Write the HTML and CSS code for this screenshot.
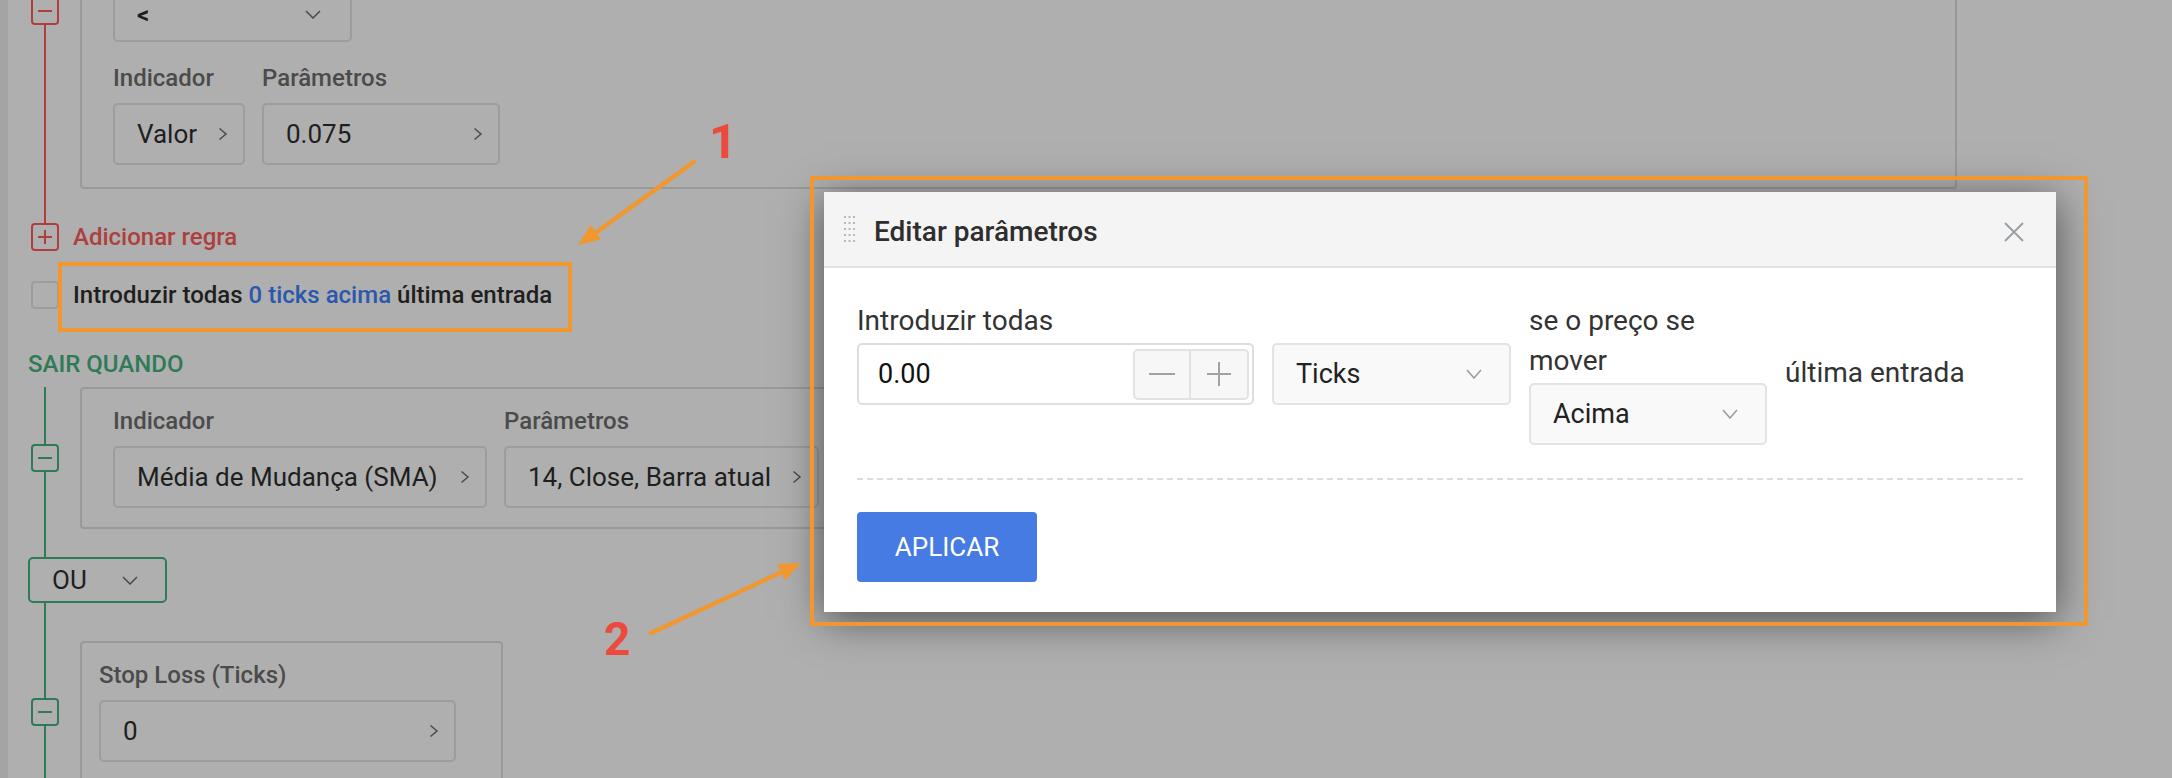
FILE: index.html
```html
<!DOCTYPE html>
<html lang="pt">
<head>
<meta charset="utf-8">
<title>Editar parâmetros</title>
<link rel="stylesheet" href="styles.css">
</head>
<body>
<div class="app">
  <div class="strip"></div>
  <main class="main">
    <section class="group red">
      <div class="tree">
        <div class="rule">
          <span class="toggle"><svg viewBox="0 0 14 14"><path d="M0 7h14"/></svg></span>
          <div class="panel wide first">
            <div class="fields">
              <div class="box select w-op"><span class="op">&lt;</span><svg class="chev-d" viewBox="0 0 16 9"><path d="M1 1l7 7 7-7"/></svg></div>
            </div>
            <div class="fields">
              <div class="field">
                <div class="label">Indicador</div>
                <div class="box w-valor"><span>Valor</span><svg class="chev-r" viewBox="0 0 10 14"><path d="M1.5 1.5 8 7l-6.5 5.5"/></svg></div>
              </div>
              <div class="field">
                <div class="label">Parâmetros</div>
                <div class="box w-param"><span>0.075</span><svg class="chev-r" viewBox="0 0 10 14"><path d="M1.5 1.5 8 7l-6.5 5.5"/></svg></div>
              </div>
            </div>
          </div>
        </div>
      </div>
      <div class="add">
        <span class="toggle"><svg viewBox="0 0 14 14"><path d="M0 7h14M7 0v14"/></svg></span>
        <span class="add-text">Adicionar regra</span>
      </div>
    </section>

    <div class="entry">
      <span class="checkbox"></span>
      <span class="entry-text">Introduzir todas <span class="link">0 ticks acima</span> última entrada</span>
    </div>

    <h3 class="section-title">SAIR QUANDO</h3>

    <section class="group green">
      <div class="tree">
        <div class="rule">
          <span class="toggle"><svg viewBox="0 0 14 14"><path d="M0 7h14"/></svg></span>
          <div class="panel wide">
            <div class="fields">
              <div class="field">
                <div class="label">Indicador</div>
                <div class="box w-media"><span>Média de Mudança (SMA)</span><svg class="chev-r" viewBox="0 0 10 14"><path d="M1.5 1.5 8 7l-6.5 5.5"/></svg></div>
              </div>
              <div class="field">
                <div class="label">Parâmetros</div>
                <div class="box w-close"><span>14, Close, Barra atual</span><svg class="chev-r" viewBox="0 0 10 14"><path d="M1.5 1.5 8 7l-6.5 5.5"/></svg></div>
              </div>
            </div>
          </div>
        </div>
        <div class="logic">
          <div class="logic-select"><span>OU</span><svg class="chev-d" viewBox="0 0 16 9"><path d="M1 1l7 7 7-7"/></svg></div>
        </div>
        <div class="rule rule-stop">
          <span class="toggle"><svg viewBox="0 0 14 14"><path d="M0 7h14"/></svg></span>
          <div class="panel stop">
            <div class="field">
              <div class="label">Stop Loss (Ticks)</div>
              <div class="box w-stop"><span>0</span><svg class="chev-r" viewBox="0 0 10 14"><path d="M1.5 1.5 8 7l-6.5 5.5"/></svg></div>
            </div>
          </div>
        </div>
      </div>
    </section>
  </main>
</div>

<div class="modal">
  <div class="modal-header">
    <svg class="grip" viewBox="0 0 11 26">
      <rect x="0" y="0" width="2" height="2"/><rect x="4.5" y="0" width="2" height="2"/><rect x="9" y="0" width="2" height="2"/>
      <rect x="0" y="6" width="2" height="2"/><rect x="4.5" y="6" width="2" height="2"/><rect x="9" y="6" width="2" height="2"/>
      <rect x="0" y="12" width="2" height="2"/><rect x="4.5" y="12" width="2" height="2"/><rect x="9" y="12" width="2" height="2"/>
      <rect x="0" y="18" width="2" height="2"/><rect x="4.5" y="18" width="2" height="2"/><rect x="9" y="18" width="2" height="2"/>
      <rect x="0" y="24" width="2" height="2"/><rect x="4.5" y="24" width="2" height="2"/><rect x="9" y="24" width="2" height="2"/>
    </svg>
    <span class="modal-title">Editar parâmetros</span>
    <svg class="close" viewBox="0 0 20 20"><path d="M1 1l18 18M19 1 1 19"/></svg>
  </div>
  <div class="modal-body">
    <div class="form-row">
      <div class="mfield f-amount">
        <div class="mlabel">Introduzir todas</div>
        <div class="num-input">
          <span class="num-value">0.00</span>
          <div class="stepper">
            <span class="step"><svg viewBox="0 0 26 2"><path d="M0 1h26"/></svg></span>
            <span class="step"><svg class="plus" viewBox="0 0 24 24"><path d="M0 12h24M12 0v24"/></svg></span>
          </div>
        </div>
      </div>
      <div class="mfield f-unit">
        <div class="mlabel">&nbsp;</div>
        <div class="mselect"><span>Ticks</span><svg class="chev-dm" viewBox="0 0 16 10"><path d="M1 1l7 8 7-8"/></svg></div>
      </div>
      <div class="mfield f-dir">
        <div class="mlabel">se o preço se mover</div>
        <div class="mselect"><span>Acima</span><svg class="chev-dm" viewBox="0 0 16 10"><path d="M1 1l7 8 7-8"/></svg></div>
      </div>
      <div class="tail">última entrada</div>
    </div>
    <div class="separator"></div>
    <button class="apply">APLICAR</button>
  </div>
</div>

<svg class="annot" viewBox="0 0 2172 778">
  <rect x="60" y="264" width="510" height="66"/>
  <rect x="812" y="178" width="1274" height="446"/>
  <line x1="695" y1="161" x2="594" y2="234"/>
  <polygon points="578,245 590.7,224.9 601.1,239.5"/>
  <line x1="649" y1="634" x2="783" y2="571.5"/>
  <polygon points="801,563 777.3,564.1 784.9,580.5"/>
</svg>
<span class="mark mark-1">1</span>
<span class="mark mark-2">2</span>
</body>
</html>
```

FILE: styles.css
```css
* { box-sizing: border-box; }

html, body {
  margin: 0;
  width: 2172px;
  height: 778px;
  overflow: hidden;
}

body {
  position: relative;
  background: #afafaf;
  font-family: Roboto, "Noto Sans", "Liberation Sans", sans-serif;
  color: #1f1f1f;
}

.app {
  display: flex;
  height: 778px;
  overflow: hidden;
}

.strip {
  width: 8px;
  flex: none;
  background: #a4a4a4;
}

.main {
  flex: 1;
  padding-left: 20px;
  margin-top: -167px;
}

/* tree */
.tree {
  margin-left: 16px;
  border-left: 2px solid;
  padding-left: 34px;
}
.red .tree { border-color: #ae3f3d; padding-bottom: 34px; }
.green .tree { border-color: #2f7b57; padding-bottom: 60px; }

.rule {
  display: flex;
  align-items: center;
}

.toggle {
  width: 28px;
  height: 28px;
  flex: none;
  border: 2px solid;
  border-radius: 4px;
  background: #afafaf;
  display: flex;
  align-items: center;
  justify-content: center;
}
.rule .toggle { margin-left: -49px; margin-right: 21px; }
.red .toggle { border-color: #ae3f3d; }
.green .toggle { border-color: #2f7b57; }
.toggle svg { width: 14px; height: 14px; fill: none; stroke-width: 2; }
.red .toggle svg { stroke: #ae3f3d; }
.green .toggle svg { stroke: #2f7b57; }

.panel {
  border: 2px solid #999;
  border-radius: 4px;
}
.panel.wide {
  width: 1877px;
  padding: 18px 31px 19px;
}
.panel.first {
  padding: 145px 31px 22px;
  display: flex;
  flex-direction: column;
  gap: 22px;
}
.panel.stop {
  width: 423px;
  padding: 18px 17px 19px;
}

.fields {
  display: flex;
  gap: 17px;
}

.label {
  font-size: 24px;
  line-height: 28px;
  font-weight: 500;
  color: #4b4b4b;
  margin-bottom: 11px;
}

.box {
  height: 62px;
  border: 2px solid #9d9d9d;
  border-radius: 5px;
  display: flex;
  align-items: center;
  justify-content: space-between;
  padding: 0 15px 0 22px;
  font-size: 26px;
  color: #1f1f1f;
}
.box.select { padding: 7px 29px 0 22px; }
.op { font-weight: 700; font-size: 24px; line-height: 20px; }

.w-valor { width: 132px; }
.w-param { width: 238px; }
.w-op { width: 239px; }
.w-media { width: 374px; }
.w-close { width: 315px; }
.w-stop { width: 357px; }

.chev-r {
  width: 10px;
  height: 14px;
  fill: none;
  stroke: #4a4a4a;
  stroke-width: 1.5;
}
.chev-d {
  width: 16px;
  height: 9px;
  fill: none;
  stroke: #4a4a4a;
  stroke-width: 1.5;
}

.add {
  display: flex;
  align-items: center;
  gap: 14px;
  padding-left: 3px;
}
.add-text {
  font-size: 24px;
  line-height: 28px;
  font-weight: 500;
  color: #ae3f3d;
}

.entry {
  display: flex;
  align-items: center;
  gap: 14px;
  padding-left: 3px;
  margin-top: 30px;
}
.checkbox {
  width: 28px;
  height: 28px;
  border: 2px solid #9d9d9d;
  border-radius: 4px;
  flex: none;
}
.entry-text {
  font-size: 24px;
  line-height: 28px;
  font-weight: 500;
  color: #1f1f1f;
}
.link { color: #2b58ad; }

.section-title {
  margin: 41px 0 9px;
  font-size: 24px;
  line-height: 28px;
  font-weight: 500;
  color: #2f7b57;
}

.logic {
  margin: 28px 0 38px -52px;
}
.logic-select {
  width: 139px;
  height: 46px;
  border: 2px solid #2f7b57;
  border-radius: 5px;
  background: #afafaf;
  display: flex;
  align-items: center;
  justify-content: space-between;
  padding: 0 27px 0 22px;
  font-size: 26px;
  color: #1f1f1f;
}

/* modal */
.modal {
  position: absolute;
  left: 824px;
  top: 192px;
  width: 1232px;
  height: 420px;
  background: #fff;
  box-shadow: 0 8px 40px rgba(0, 0, 0, 0.55);
}
.modal-header {
  height: 76px;
  background: #f4f4f4;
  border-bottom: 2px solid #e0e0e0;
  display: flex;
  align-items: center;
  padding: 5px 32px 0 20px;
}
.grip {
  width: 11px;
  height: 26px;
  fill: #b8b8b8;
  flex: none;
  margin-top: -5px;
}
.modal-title {
  margin-left: 19px;
  font-size: 28px;
  font-weight: 500;
  color: #2e2e2e;
}
.close {
  margin-left: auto;
  width: 20px;
  height: 20px;
  fill: none;
  stroke: #9aa0a6;
  stroke-width: 2;
}

.modal-body {
  padding: 33px 33px 30px;
}
.form-row {
  display: flex;
  align-items: flex-start;
  gap: 18px;
}
.mfield {
  display: flex;
  flex-direction: column;
  gap: 2px;
}
.mlabel {
  font-size: 28px;
  line-height: 40px;
  color: #333;
}
.f-dir { width: 238px; }

.num-input {
  width: 397px;
  height: 62px;
  border: 2px solid #dedede;
  border-radius: 5px;
  display: flex;
  align-items: center;
  padding: 0 3px 0 19px;
}
.num-value {
  flex: 1;
  font-size: 27px;
  color: #111;
}
.stepper {
  display: flex;
  height: 51px;
}
.step {
  width: 58px;
  height: 51px;
  background: #f7f7f7;
  border: 2px solid #e2e2e2;
  display: flex;
  align-items: center;
  justify-content: center;
}
.step:first-child { border-radius: 5px 0 0 5px; }
.step:last-child { border-radius: 0 5px 5px 0; border-left: none; }
.step svg {
  width: 26px;
  height: 2px;
  stroke: #a2a2a2;
  stroke-width: 2;
  fill: none;
}
.step svg.plus { width: 24px; height: 24px; }

.mselect {
  height: 62px;
  border: 2px solid #e3e3e3;
  border-radius: 5px;
  background: #f9f9f9;
  display: flex;
  align-items: center;
  justify-content: space-between;
  padding: 0 27px 0 22px;
  font-size: 27px;
  color: #222;
}
.f-unit .mselect { width: 239px; }
.f-dir .mselect { width: 238px; }
.chev-dm {
  width: 16px;
  height: 10px;
  fill: none;
  stroke: #9a9a9a;
  stroke-width: 1.5;
}

.tail {
  align-self: center;
  font-size: 28px;
  line-height: 40px;
  color: #333;
}

.separator {
  margin-top: 33px;
  border-top: 2px dashed #dcdcdc;
}

.apply {
  margin-top: 32px;
  width: 180px;
  height: 70px;
  border: none;
  border-radius: 4px;
  background: #467be3;
  color: #fff;
  font-family: Roboto, "Noto Sans", "Liberation Sans", sans-serif;
  font-size: 26px;
  padding: 0;
}

/* annotations */
.annot {
  position: absolute;
  left: 0;
  top: 0;
  width: 2172px;
  height: 778px;
  pointer-events: none;
}
.annot rect {
  fill: none;
  stroke: #f1972f;
  stroke-width: 4;
}
.annot line {
  stroke: #f1972f;
  stroke-width: 4.5;
}
.annot polygon {
  fill: #f1972f;
}

.mark {
  position: absolute;
  font-size: 49px;
  line-height: 49px;
  font-weight: 700;
  color: #ea4b3d;
}
.mark-1 { left: 709px; top: 117px; }
.mark-2 { left: 604px; top: 616px; font-size: 46px; line-height: 46px; }
```
